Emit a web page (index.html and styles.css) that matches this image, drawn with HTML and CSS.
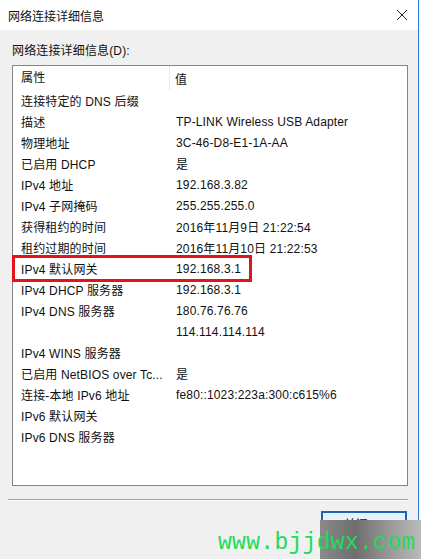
FILE: index.html
```html
<!DOCTYPE html>
<html lang="zh-CN">
<head>
<meta charset="utf-8">
<title>网络连接详细信息</title>
<link rel="stylesheet" href="styles.css">
</head>
<body>
<div class="window">
  <div class="titlebar">
    <span class="title">网络连接详细信息</span>
    <svg class="close" width="12" height="12" viewBox="0 0 12 12"><path d="M1 1L11 11M11 1L1 11" stroke="#222" stroke-width="1" fill="none"/></svg>
  </div>
  <div class="content">
    <div class="label">网络连接详细信息(D):</div>
    <div class="list">
      <div class="head">
        <div class="c1">属性</div>
        <div class="c2">值</div>
      </div>
      <div class="row"><div class="c1">连接特定的 DNS 后缀</div><div class="c2"></div></div>
      <div class="row"><div class="c1">描述</div><div class="c2">TP-LINK Wireless USB Adapter</div></div>
      <div class="row"><div class="c1">物理地址</div><div class="c2">3C-46-D8-E1-1A-AA</div></div>
      <div class="row"><div class="c1">已启用 DHCP</div><div class="c2">是</div></div>
      <div class="row"><div class="c1">IPv4 地址</div><div class="c2">192.168.3.82</div></div>
      <div class="row"><div class="c1">IPv4 子网掩码</div><div class="c2">255.255.255.0</div></div>
      <div class="row"><div class="c1">获得租约的时间</div><div class="c2">2016年11月9日 21:22:54</div></div>
      <div class="row"><div class="c1">租约过期的时间</div><div class="c2">2016年11月10日 21:22:53</div></div>
      <div class="row marked"><div class="c1">IPv4 默认网关</div><div class="c2">192.168.3.1</div></div>
      <div class="row"><div class="c1">IPv4 DHCP 服务器</div><div class="c2">192.168.3.1</div></div>
      <div class="row"><div class="c1">IPv4 DNS 服务器</div><div class="c2">180.76.76.76</div></div>
      <div class="row"><div class="c1"></div><div class="c2">114.114.114.114</div></div>
      <div class="row"><div class="c1">IPv4 WINS 服务器</div><div class="c2"></div></div>
      <div class="row"><div class="c1">已启用 NetBIOS over Tc...</div><div class="c2">是</div></div>
      <div class="row"><div class="c1">连接-本地 IPv6 地址</div><div class="c2">fe80::1023:223a:300:c615%6</div></div>
      <div class="row"><div class="c1">IPv6 默认网关</div><div class="c2"></div></div>
      <div class="row"><div class="c1">IPv6 DNS 服务器</div><div class="c2"></div></div>
    </div>
    <div class="sep"></div>
    <div class="actions">
      <button class="btn">关闭(C)</button>
    </div>
  </div>
  <svg class="smudge" width="101" height="39" viewBox="0 0 101 39">
    <defs>
      <linearGradient id="sg" x1="0" y1="0" x2="1" y2="0">
        <stop offset="0" stop-color="#8a8a8a"/>
        <stop offset="0.35" stop-color="#6e6e6e"/>
        <stop offset="0.7" stop-color="#9a9a9a"/>
        <stop offset="1" stop-color="#bababa"/>
      </linearGradient>
    </defs>
    <rect x="0" y="0" width="101" height="39" fill="url(#sg)"/>
  </svg>
  <div class="watermark">www.bjjdwx.com</div>
</div>
</body>
</html>
```
FILE: styles.css
```css
*, *::before, *::after { box-sizing: border-box; }
html, body { margin: 0; padding: 0; }
body {
  width: 421px;
  height: 559px;
  background: #f6f6f6;
  font-family: "Liberation Sans", "Noto Sans CJK SC", sans-serif;
  font-size: 12px;
  letter-spacing: 0.15px;
  color: #111;
  overflow: hidden;
}
.window {
  position: relative;
  width: 419px;
  height: 559px;
  background: #f0f0f0;
  border-right: 1px solid #2b78cf;
}
.titlebar {
  height: 30px;
  background: #fff;
  display: flex;
  align-items: center;
  justify-content: space-between;
  padding: 0 10px 0 8px;
}
.title { font-size: 12px; color: #111; letter-spacing: 0; }
.close { display: block; margin-top: -1px; }
.content {
  padding: 13px 10px 0 12px;
}
.label {
  height: 16px;
  line-height: 16px;
  margin-bottom: 6px;
  color: #111;
}
.list {
  width: 396px;
  height: 421px;
  background: #fff;
  border: 1px solid #848484;
}
.head, .row {
  display: flex;
  align-items: center;
}
.head { height: 24px; }
.row { height: 21px; }
.c1 {
  width: 157px;
  padding-left: 8px;
  white-space: nowrap;
  overflow: hidden;
}
.c2 {
  padding-left: 6px;
  white-space: nowrap;
}
.head .c1 {
  height: 24px;
  line-height: 24px;
  border-right: 1px solid #e8e8e8;
}
.head .c2 { padding-left: 5px; }
.marked { position: relative; }
.marked::after {
  content: "";
  position: absolute;
  left: -1px;
  top: -3px;
  width: 240px;
  height: 27px;
  border: 3px solid #e4131b;
}
.sep {
  margin: 13px 0 0 -4px;
  width: 400px;
  border-top: 1px solid #a0a0a0;
  border-bottom: 1px solid #fff;
}
.actions {
  display: flex;
  justify-content: flex-end;
  margin-top: 10px;
}
.btn {
  width: 86px;
  height: 24px;
  margin-right: 1px;
  background: #e5f1fb;
  border: 2px solid #1e63b6;
  font-family: inherit;
  font-size: 12px;
  color: #111;
}
.smudge {
  position: absolute;
  z-index: 5;
  left: 320px;
  top: 520px;
  display: block;
}
.watermark {
  position: absolute;
  z-index: 6;
  left: 218px;
  top: 530px;
  font-family: "Liberation Mono", monospace;
  font-size: 23px;
  line-height: 26px;
  letter-spacing: 0.3px;
  white-space: nowrap;
  color: #21dc57;
}
```
